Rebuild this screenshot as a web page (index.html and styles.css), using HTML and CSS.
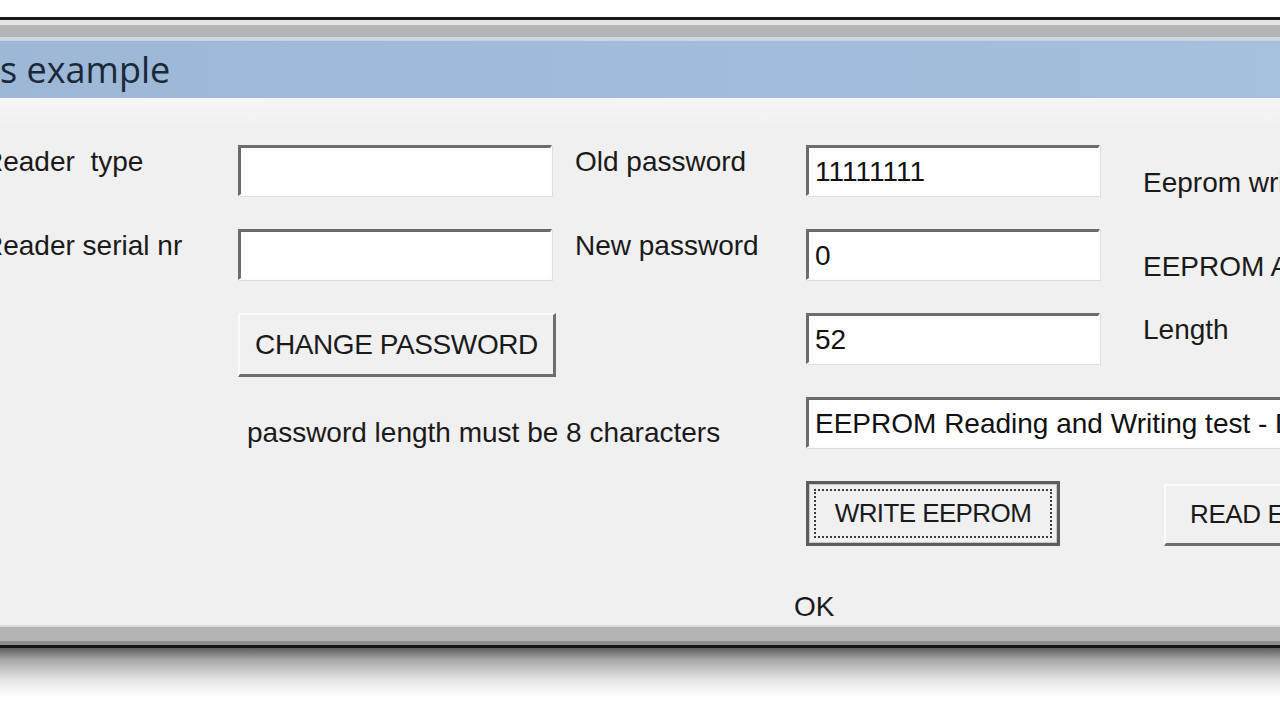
FILE: index.html
```html
<!DOCTYPE html>
<html lang="en">
<head>
    <meta charset="UTF-8">
    <title>Reader example</title>
    <link rel="stylesheet" href="styles.css">
</head>
<body>
    <div class="window">
        <div class="frame-top"></div>
        <div class="titlebar">s example</div>

        <div class="content">
            <!-- row 1 -->
            <div class="label label-cut">Reader  type</div>
            <input class="field field-left" type="text" value="" readonly>
            <div class="label label-mid">Old password</div>
            <input class="field field-right" type="text" value="11111111" readonly>
            <div class="label label-low">Eeprom write</div>

            <!-- row 2 -->
            <div class="label label-cut">Reader serial nr</div>
            <input class="field field-left" type="text" value="" readonly>
            <div class="label label-mid">New password</div>
            <input class="field field-right" type="text" value="0" readonly>
            <div class="label label-low">EEPROM Address</div>

            <!-- row 3 -->
            <div></div>
            <button class="btn btn-change">CHANGE PASSWORD</button>
            <div></div>
            <input class="field field-right" type="text" value="52" readonly>
            <div class="label">Length</div>

            <!-- row 4 -->
            <div></div>
            <div class="label note">password length must be 8 characters</div>
            <div></div>
            <input class="field field-wide" type="text" value="EEPROM Reading and Writing test - Done" readonly>

            <!-- row 5 -->
            <div></div>
            <div></div>
            <div></div>
            <button class="btn btn-default"><span>WRITE EEPROM</span></button>
            <button class="btn btn-read">READ EEPROM</button>

            <!-- row 6 -->
            <div></div>
            <div></div>
            <div></div>
            <div class="label status">OK</div>
        </div>

        <div class="frame-bottom"></div>
    </div>
    <div class="shadow"></div>
</body>
</html>
```

FILE: styles.css
```css
html, body {
    margin: 0;
    padding: 0;
    overflow: hidden;
    background: #ffffff;
    font-family: "Liberation Sans", Arial, sans-serif;
}

.window {
    margin-top: 17px;
    width: 1400px;
    border-top: 3px solid #1a1a1a;
    background: #f0f0f0;
}

.frame-top {
    height: 20px;
    background: linear-gradient(#e6e6e6 0 5px, #b4b4b4 5px 17px, #cfd8e2 17px);
}

.titlebar {
    height: 58px;
    line-height: 58px;
    background: linear-gradient(to right, #9cb8d6, #a6c1de);
    border-top: 1px solid #c3d3e4;
    box-sizing: border-box;
    font-family: "Open Sans", "Noto Sans", sans-serif;
    font-size: 36px;
    color: #1b2838;
    white-space: nowrap;
}

.content {
    display: grid;
    grid-template-columns: 238px 318px 250px 337px 1fr;
    grid-template-rows: 51px 51px 51px 51px 65px auto;
    row-gap: 33px;
    height: 527px;
    padding-top: 47px;
    box-sizing: border-box;
    background: linear-gradient(#f6f6f6, #f0f0f0 30px);
}

.label {
    font-size: 28px;
    line-height: 34px;
    color: #1a1a1a;
    white-space: pre;
    overflow: visible;
}

.label-cut {
    margin-left: -17px;
}

.label-mid {
    padding-left: 19px;
}

.label-low {
    padding-top: 21px;
}

.note {
    padding-top: 19px;
    padding-left: 9px;
}

.status {
    margin-left: -12px;
    padding-top: 11px;
}

.field {
    box-sizing: border-box;
    height: 51px;
    margin: 0;
    padding: 2px 0 0 6px;
    background: #ffffff;
    border-style: solid;
    border-width: 3px 2px 2px 3px;
    border-color: #6b6b6b #fdfdfd #fdfdfd #6b6b6b;
    box-shadow: 1px 1px 0 #dedede;
    font-family: "Liberation Sans", Arial, sans-serif;
    font-size: 28px;
    color: #111111;
    outline: none;
}

.field-left {
    width: 314px;
}

.field-right {
    width: 294px;
}

.field-wide {
    grid-column: 4 / 6;
    width: 560px;
}

.btn {
    box-sizing: border-box;
    margin: 0;
    padding: 0;
    background: #f0f0f0;
    font-family: "Liberation Sans", Arial, sans-serif;
    font-size: 28px;
    color: #1a1a1a;
    letter-spacing: -0.4px;
    border-style: solid;
    border-width: 2px 3px 3px 2px;
    border-color: #fbfbfb #6e6e6e #6e6e6e #fbfbfb;
}

.btn-change {
    width: 318px;
    height: 64px;
}

.btn-default {
    width: 254px;
    height: 65px;
    padding: 5px;
    border: 3px solid #5c5c5c;
    box-shadow: inset 0 0 0 1px #c8c8c8;
    font-size: 26px;
    letter-spacing: -0.6px;
}

.btn-default span {
    display: flex;
    align-items: center;
    justify-content: center;
    height: 100%;
    border: 2px dotted #3c3c3c;
    box-sizing: border-box;
}

.btn-read {
    width: 230px;
    height: 62px;
    margin-top: 3px;
    margin-left: 21px;
    text-align: left;
    padding-left: 24px;
    font-size: 26px;
}

.frame-bottom {
    height: 20px;
    background: linear-gradient(#dadada 0 2px, #b4b4b4 2px 16px, #8c8c8c 16px);
    border-bottom: 3px solid #141414;
}

.shadow {
    height: 50px;
    background: linear-gradient(#5f5f5f, #a8a8a8 12px, #e6e6e6 32px, #ffffff);
}
```
